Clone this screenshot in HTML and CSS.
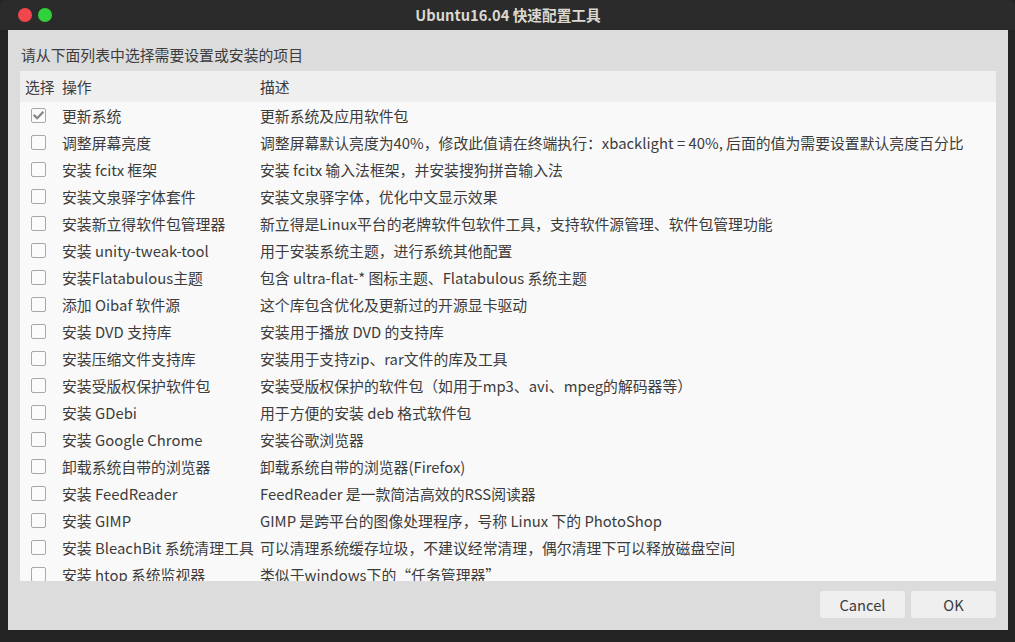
FILE: index.html
```html
<!DOCTYPE html>
<html lang="zh-CN">
<head>
<meta charset="utf-8">
<title>Ubuntu16.04 快速配置工具</title>
<link rel="stylesheet" href="styles.css">
</head>
<body>
<div class="window">
  <div class="titlebar">
    <div class="lights"><span class="light red"></span><span class="light green"></span></div>
    <div class="title">Ubuntu16.04 快速配置工具</div>
  </div>
  <div class="content">
    <div class="prompt">请从下面列表中选择需要设置或安装的项目</div>
    <div class="list">
      <div class="row header"><div class="c1">选择</div><div class="c2">操作</div><div class="c3">描述</div></div>
      <div class="row"><div class="c1"><span class="box checked"><svg viewBox="0 0 15 15" width="15" height="15"><path d="M3.5 7.6 L6.2 10.2 L11.6 4.6" fill="none" stroke="#858585" stroke-width="2.2" stroke-linecap="square"/></svg></span></div><div class="c2">更新系统</div><div class="c3">更新系统及应用软件包</div></div>
      <div class="row"><div class="c1"><span class="box"></span></div><div class="c2">调整屏幕亮度</div><div class="c3">调整屏幕默认亮度为40%，修改此值请在终端执行：xbacklight = 40%, 后面的值为需要设置默认亮度百分比</div></div>
      <div class="row"><div class="c1"><span class="box"></span></div><div class="c2">安装 fcitx 框架</div><div class="c3">安装 fcitx 输入法框架，并安装搜狗拼音输入法</div></div>
      <div class="row"><div class="c1"><span class="box"></span></div><div class="c2">安装文泉驿字体套件</div><div class="c3">安装文泉驿字体，优化中文显示效果</div></div>
      <div class="row"><div class="c1"><span class="box"></span></div><div class="c2">安装新立得软件包管理器</div><div class="c3">新立得是Linux平台的老牌软件包软件工具，支持软件源管理、软件包管理功能</div></div>
      <div class="row"><div class="c1"><span class="box"></span></div><div class="c2">安装 unity-tweak-tool</div><div class="c3">用于安装系统主题，进行系统其他配置</div></div>
      <div class="row"><div class="c1"><span class="box"></span></div><div class="c2">安装Flatabulous主题</div><div class="c3">包含 ultra-flat-* 图标主题、Flatabulous 系统主题</div></div>
      <div class="row"><div class="c1"><span class="box"></span></div><div class="c2">添加 Oibaf 软件源</div><div class="c3">这个库包含优化及更新过的开源显卡驱动</div></div>
      <div class="row"><div class="c1"><span class="box"></span></div><div class="c2">安装 DVD 支持库</div><div class="c3">安装用于播放 DVD 的支持库</div></div>
      <div class="row"><div class="c1"><span class="box"></span></div><div class="c2">安装压缩文件支持库</div><div class="c3">安装用于支持zip、rar文件的库及工具</div></div>
      <div class="row"><div class="c1"><span class="box"></span></div><div class="c2">安装受版权保护软件包</div><div class="c3">安装受版权保护的软件包（如用于mp3、avi、mpeg的解码器等）</div></div>
      <div class="row"><div class="c1"><span class="box"></span></div><div class="c2">安装 GDebi</div><div class="c3">用于方便的安装 deb 格式软件包</div></div>
      <div class="row"><div class="c1"><span class="box"></span></div><div class="c2">安装 Google Chrome</div><div class="c3">安装谷歌浏览器</div></div>
      <div class="row"><div class="c1"><span class="box"></span></div><div class="c2">卸载系统自带的浏览器</div><div class="c3">卸载系统自带的浏览器(Firefox)</div></div>
      <div class="row"><div class="c1"><span class="box"></span></div><div class="c2">安装 FeedReader</div><div class="c3">FeedReader 是一款简洁高效的RSS阅读器</div></div>
      <div class="row"><div class="c1"><span class="box"></span></div><div class="c2">安装 GIMP</div><div class="c3">GIMP 是跨平台的图像处理程序，号称 Linux 下的 PhotoShop</div></div>
      <div class="row"><div class="c1"><span class="box"></span></div><div class="c2">安装 BleachBit 系统清理工具</div><div class="c3">可以清理系统缓存垃圾，不建议经常清理，偶尔清理下可以释放磁盘空间</div></div>
      <div class="row"><div class="c1"><span class="box"></span></div><div class="c2">安装 htop 系统监视器</div><div class="c3">类似于windows下的“任务管理器”</div></div>
    </div>
    <div class="buttons">
      <button class="btn">Cancel</button>
      <button class="btn">OK</button>
    </div>
  </div>
</div>
</body>
</html>
```

FILE: styles.css
```css
html, body {
  margin: 0;
  padding: 0;
  background: #232323;
  height: 642px;
  overflow: hidden;
}
body {
  font-family: "Noto Sans CJK SC", "Noto Sans", sans-serif;
  font-size: 14.85px;
  color: #3c3c3c;
}
.window {
  margin-left: 8px;
  width: 1000px;
}
.titlebar {
  position: relative;
  height: 30px;
  background: #2b2b2b;
  border-radius: 6px 6px 0 0;
  margin-left: -8px;
  margin-right: -7px;
  display: flex;
  align-items: center;
  justify-content: center;
}
.lights {
  position: absolute;
  left: 18px;
  top: 8px;
  display: flex;
  gap: 6px;
}
.light {
  width: 14px;
  height: 14px;
  border-radius: 50%;
  display: block;
}
.red { background: #f0474d; }
.green { background: #30d13b; }
.title {
  color: #dcd8cf;
  font-weight: bold;
  font-size: 14.67px;
  margin-left: 1px;
  line-height: 30px;
}
.content {
  background: #dcdcdc;
  height: 600px;
  box-sizing: border-box;
  padding: 15px 12px 12px 12px;
  display: flex;
  flex-direction: column;
}
.prompt {
  height: 20px;
  line-height: 20px;
  padding-left: 1px;
  margin-bottom: 6px;
}
.list {
  background: #f9f9f9;
  height: 510px;
  overflow: hidden;
}
.row {
  display: grid;
  grid-template-columns: 42px 198px 1fr;
  height: 27px;
  align-items: center;
  white-space: nowrap;
}
.row.header {
  height: 31px;
  background: #efefef;
}
.row.header .c1 { padding-left: 5px; }
.c1 {
  display: flex;
  align-items: center;
  padding-left: 11px;
}
.box {
  display: block;
  width: 13px;
  height: 13px;
  border: 1px solid #a8a8a8;
  border-radius: 2px;
  background: #fbfbfb;
  position: relative;
}
.box svg {
  position: absolute;
  left: -1px;
  top: -1px;
}
.buttons {
  display: flex;
  justify-content: flex-end;
  gap: 6px;
  margin-top: 10px;
}
.btn {
  width: 85px;
  height: 27px;
  border: none;
  border-radius: 3px;
  background: #efefef;
  color: #3c3c3c;
  font-family: "Noto Sans CJK SC", "Noto Sans", sans-serif;
  font-size: 14.67px;
  padding: 0;
}
```
